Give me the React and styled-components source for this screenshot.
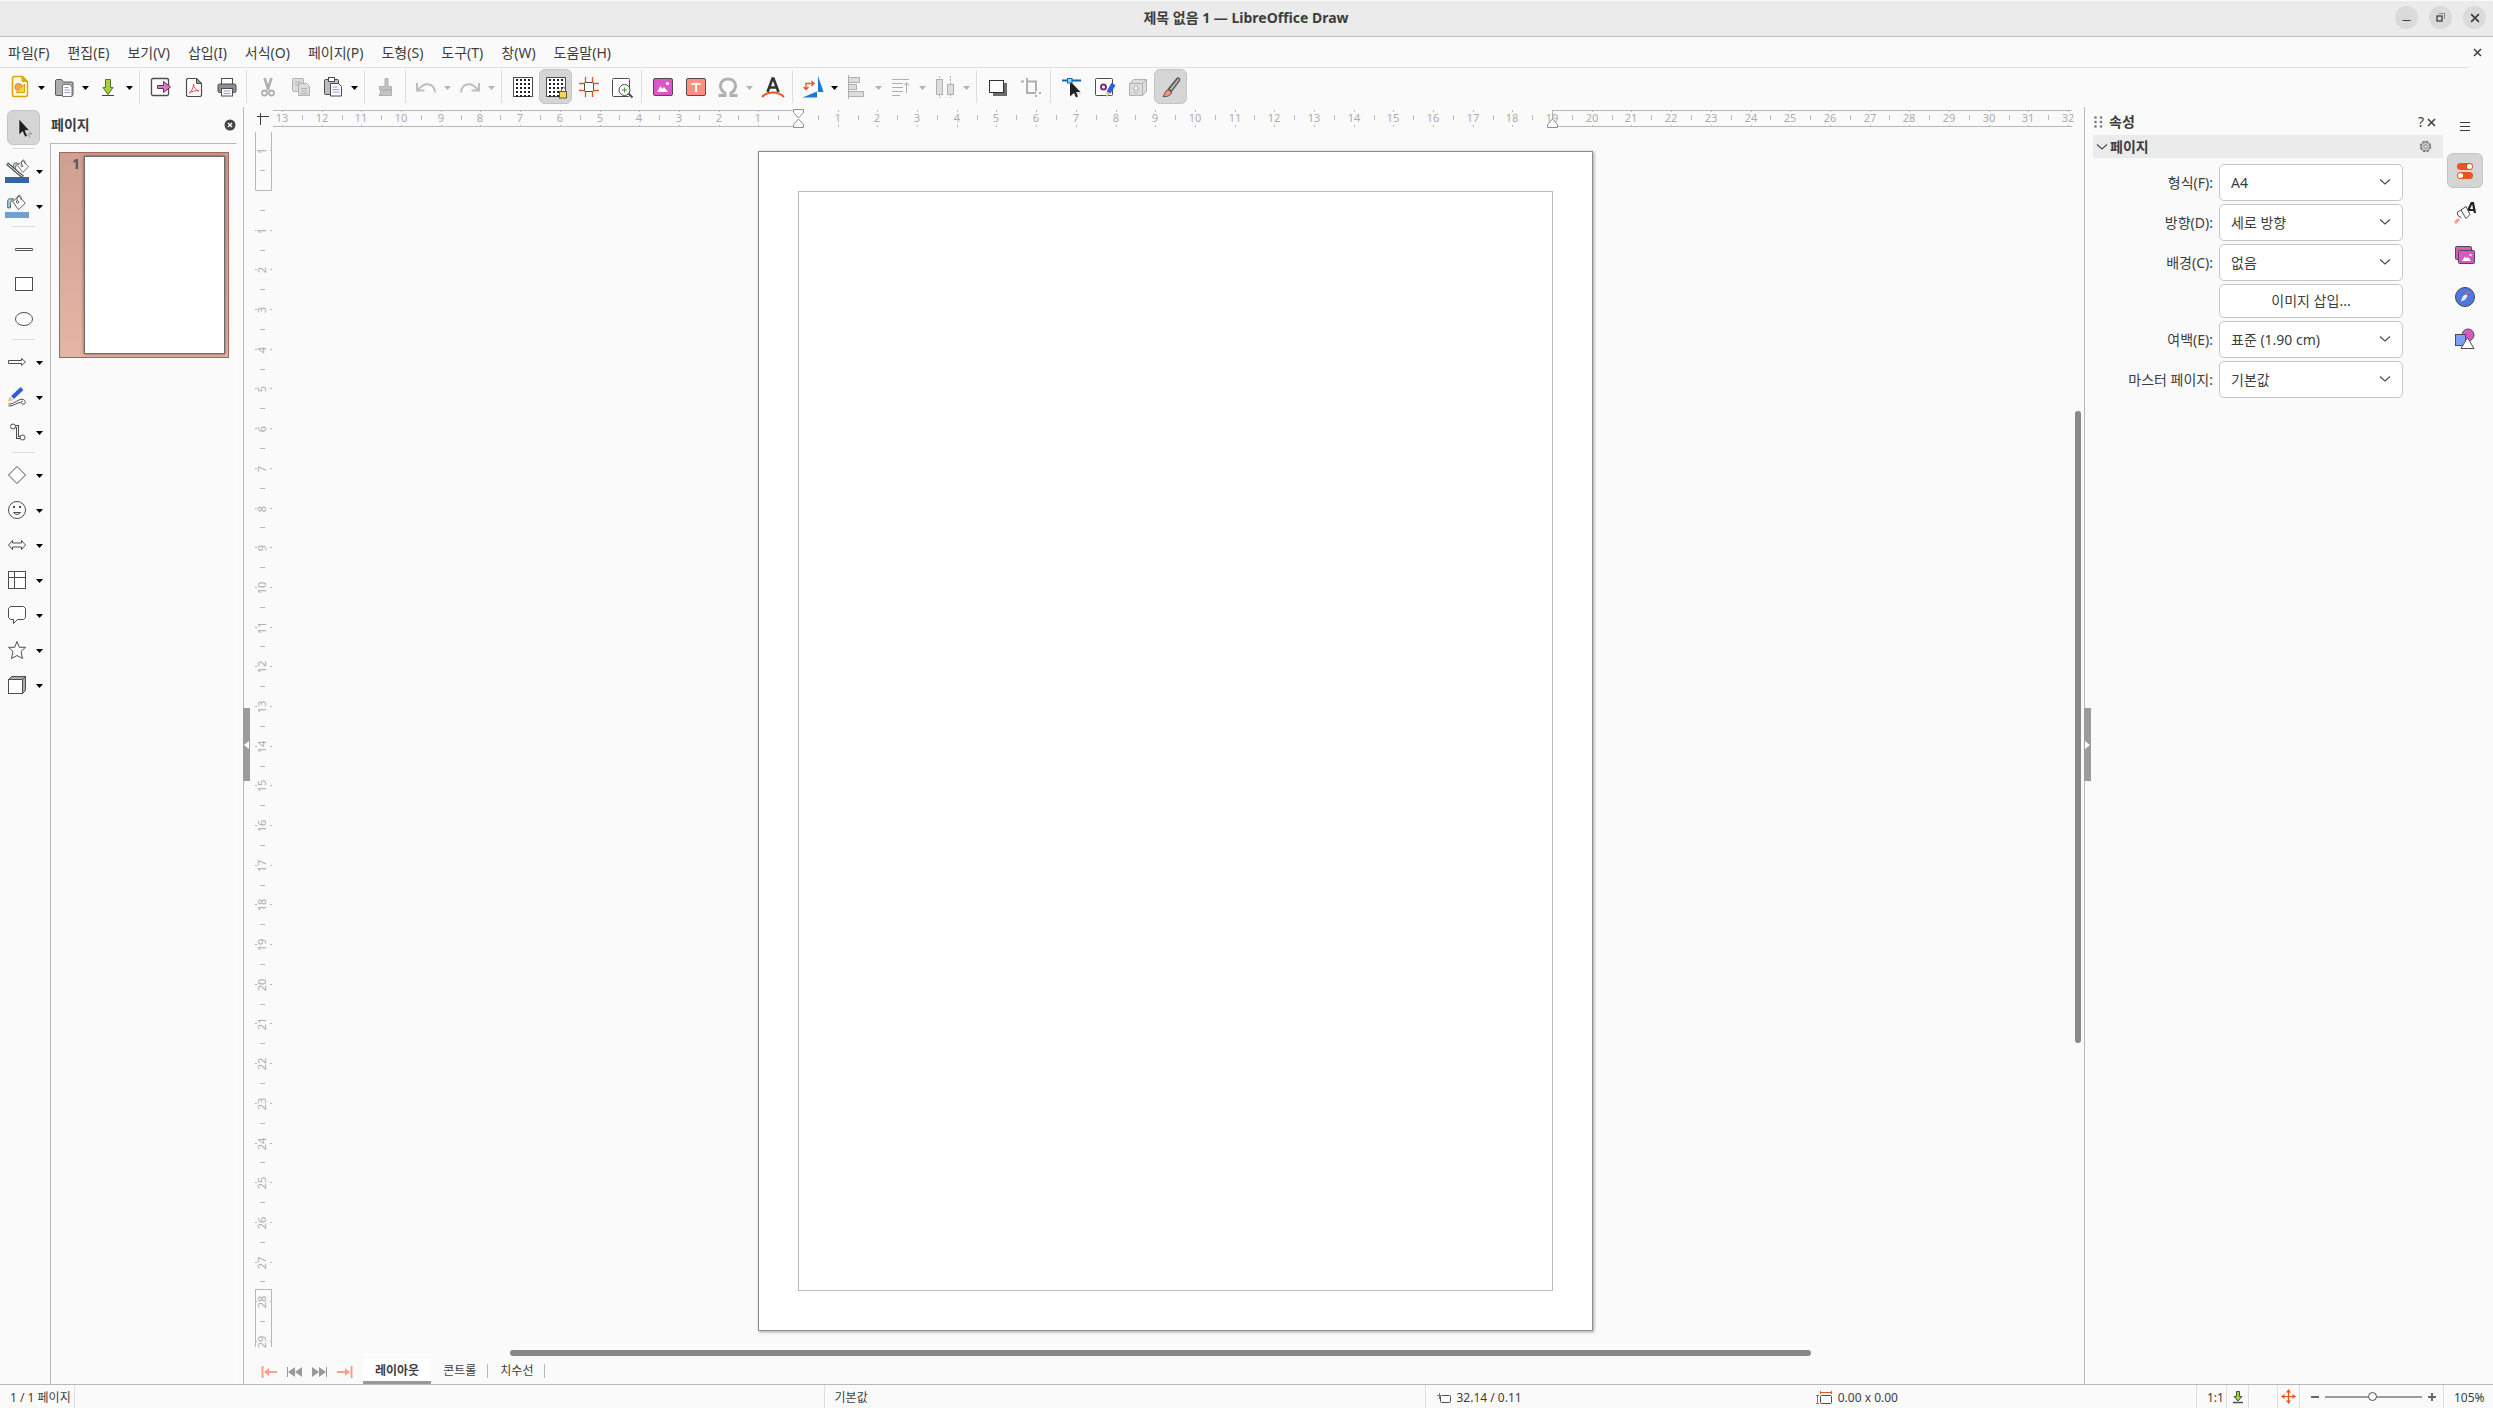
import { Fragment } from "react";
import styled, { createGlobalStyle, css } from "styled-components";

const GlobalStyle = createGlobalStyle`
  * {
    box-sizing: border-box;
  }
  body {
    margin: 0;
    background: #fafafa;
    color: #3d3d3d;
    font-family: "Noto Sans", "Noto Sans CJK KR", sans-serif;
    font-size: 14px;
    line-height: 20px;
  }
  button, select {
    font: inherit;
    color: inherit;
  }
`;

/* pixels per centimetre at 105% */
const CM = 39.69;
const ORIGIN_X = 525;
const ORIGIN_Y = 60;
const DARK = "#4d4d4d";
const FAINT = "#b8b8b8";

const Window = styled.div`
  display: flex;
  flex-direction: column;
  height: 100vh;
  overflow: hidden;
`;

const PlainButton = styled.button`
  display: flex;
  align-items: center;
  justify-content: center;
  padding: 0;
  border: 0;
  background: none;
`;

const TitleBar = styled.header`
  display: grid;
  grid-template-columns: 1fr auto 1fr;
  align-items: center;
  height: 37px;
  flex: none;
  padding: 0 7px 2px 6px;
  background: #ebebeb;
  border-top: 1px solid #fafafa;
  border-bottom: 1px solid #bdbdbd;
`;

const Title = styled.h1`
  grid-column: 2;
  margin: 0;
  font-size: 14px;
  font-weight: 700;
`;

const WindowButtons = styled.div`
  display: flex;
  justify-content: flex-end;
  gap: 11px;
`;

const RoundButton = styled(PlainButton)`
  width: 23px;
  height: 23px;
  border-radius: 50%;
  background: #dadada;
`;

const MenuBar = styled.nav`
  display: flex;
  align-items: center;
  gap: 18px;
  height: 31px;
  flex: none;
  margin-right: 24px;
  padding: 2px 0 0 8px;
  border-bottom: 1px solid #e0e0e0;
`;

const MenuItem = styled(PlainButton)`
  white-space: nowrap;
`;

const CloseDocument = styled(PlainButton)`
  position: absolute;
  top: 42px;
  right: 6px;
  width: 20px;
  height: 20px;
`;

const Toolbar = styled.div`
  display: flex;
  align-items: center;
  height: 39px;
  flex: none;
  padding: 0 0 2px 4px;
`;

const pressed = css`
  background: #d5d5d5;
  border: 1px solid #c4c4c4;
  border-radius: 6px;
`;

const ToolButton = styled(PlainButton)`
  width: ${(p) => (p.$split ? 31 : 33)}px;
  height: 35px;
  flex: none;
  ${(p) => p.$on && pressed}
`;

const ArrowButton = styled(PlainButton)`
  width: 13px;
  height: 35px;
  flex: none;
  padding-top: 2px;
`;

const ToolSeparator = styled.span`
  width: 1px;
  height: 33px;
  margin: 0 4px 0 3px;
  background: #dedede;
`;

const Svg = styled.svg`
  display: block;
  flex: none;
`;

const Workspace = styled.main`
  display: flex;
  flex: 1;
  min-height: 0;
`;

const DrawBar = styled.div`
  display: flex;
  flex-direction: column;
  width: 50px;
  padding-top: 3px;
`;

const DrawRow = styled.div`
  display: flex;
  align-items: center;
  height: 35px;
  flex: none;
  padding-left: ${(p) => (p.$single ? 7 : 0)}px;
`;

const DrawButton = styled(PlainButton)`
  width: 33px;
  height: 35px;
  ${(p) => p.$on && pressed}
`;

const DrawSeparator = styled.span`
  width: 23px;
  height: 1px;
  flex: none;
  margin: 3px 0 4px 12px;
  background: #dedede;
`;

const PagePanel = styled.aside`
  display: flex;
  flex-direction: column;
  width: 193px;
`;

const PanelTitle = styled.div`
  display: flex;
  align-items: center;
  justify-content: space-between;
  height: 36px;
  flex: none;
  padding: 0 7px 0 1px;
`;

const Heading = styled.h2`
  margin: 0;
  font-size: 14px;
  font-weight: 700;
`;

const PageList = styled.div`
  flex: 1;
  margin-right: 6px;
  padding: 8px;
  border-top: 1px solid #b8b8b8;
  border-left: 1px solid #b8b8b8;
  border-right: 1px solid #fff;
`;

const PageThumb = styled.button`
  display: flex;
  justify-content: space-between;
  align-items: stretch;
  width: 170px;
  height: 206px;
  padding: 3px;
  border: 1px solid #a0675a;
  background: linear-gradient(#cfa092, #e4b4a5);
  text-align: left;
`;

const ThumbNumber = styled.span`
  width: 17px;
  font-weight: 700;
  font-size: 14px;
  line-height: 16px;
  text-align: right;
  color: #555;
`;

const ThumbPage = styled.span`
  width: 141px;
  background: #fff;
  border: 1px solid #6b6b6b;
  box-shadow: 0 0 3px rgba(0, 0, 0, 0.5);
`;

const Splitter = styled.div`
  position: relative;
  width: ${(p) => p.$width}px;
  flex: none;
  border-left: 1px solid #b8b8b8;
`;

const SplitterHandle = styled(PlainButton)`
  position: absolute;
  top: 47.1%;
  left: -1px;
  width: 7px;
  height: 73px;
  background: #9c9c9c;
`;

const DocumentArea = styled.section`
  display: grid;
  grid-template-columns: 23px minmax(0, 1fr) 12px;
  grid-template-rows: 24px minmax(0, 1fr) 12px 25px;
  flex: 1;
  min-width: 0;
`;

const RulerSvg = styled.svg`
  display: block;
  width: 100%;
  height: 100%;
  overflow: visible;
`;

const RulerText = styled.text`
  fill: #acacac;
  font-family: "Noto Sans", sans-serif;
  font-size: 11px;
  text-anchor: middle;
`;

const Canvas = styled.div`
  overflow: hidden;
`;

const Sheet = styled.div`
  width: 835px;
  height: 1180px;
  margin: 20px 0 0 ${ORIGIN_X - 40}px;
  padding: 39px;
  background: #fff;
  border: 1px solid #8c8c8c;
  box-shadow: 1px 1px 3px rgba(0, 0, 0, 0.35);
`;

const SheetMargins = styled.div`
  height: 100%;
  border: 1px solid #bababa;
`;

const VerticalTrack = styled.div`
  padding-left: 3px;
`;

const VerticalThumb = styled.div`
  position: relative;
  top: 23%;
  width: 6px;
  height: 52%;
  border-radius: 3px;
  background: #888;
`;

const HorizontalTrack = styled.div`
  grid-column: 2;
  padding-top: 3px;
`;

const HorizontalThumb = styled.div`
  width: 72.3%;
  height: 6px;
  margin-left: 13.2%;
  border-radius: 3px;
  background: #888;
`;

const TabRow = styled.div`
  display: flex;
  align-items: center;
  grid-column: 1 / -1;
  padding-left: 7px;
  font-size: 12px;
`;

const NavButton = styled(PlainButton)`
  width: 25px;
  height: 25px;
`;

const LayerTab = styled(PlainButton)`
  position: relative;
  height: 25px;
  padding: 0 12px 2px;
  ${(p) =>
    p.$active
      ? css`
          margin-left: 6px;
          background: #fff;
          border-bottom: 3px solid #999;
          padding-top: 3px;
          font-weight: 700;
        `
      : css`
          &::after {
            content: "";
            position: absolute;
            right: 0;
            top: 5px;
            height: 14px;
            border-right: 1px solid #b8b8b8;
          }
        `}
`;

const Sidebar = styled.aside`
  display: flex;
  width: 408px;
  flex: none;
  padding-left: 8px;
`;

const Deck = styled.div`
  width: 350px;
`;

const DeckTitle = styled.div`
  display: flex;
  align-items: center;
  height: 28px;
  gap: 6px;
  padding: 2px 7px 0 1px;
`;

const DeckTools = styled.div`
  display: flex;
  gap: 3px;
  margin-left: auto;
`;

const SectionTitle = styled.div`
  display: flex;
  align-items: center;
  height: 23px;
  gap: 2px;
  padding: 0 11px 0 3px;
  background: #ebebeb;
`;

const SectionMenu = styled(PlainButton)`
  margin-left: auto;
`;

const Form = styled.form`
  display: grid;
  grid-template-columns: 120px 184px;
  align-items: center;
  gap: 3px 6px;
  padding-top: 6px;
`;

const FieldLabel = styled.label`
  text-align: right;
`;

const SelectBox = styled.div`
  position: relative;
  svg {
    position: absolute;
    right: 12px;
    top: 12px;
    pointer-events: none;
  }
`;

const Select = styled.select`
  display: block;
  width: 100%;
  height: 37px;
  padding: 0 11px;
  appearance: none;
  background: #fff;
  border: 1px solid #c6c6c6;
  border-radius: 5px;
`;

const InsertImage = styled.button`
  grid-column: 2;
  height: 34px;
  background: #fff;
  border: 1px solid #c6c6c6;
  border-radius: 5px;
`;

const DeckTabs = styled.div`
  display: flex;
  flex-direction: column;
  align-items: center;
  gap: 7px;
  width: 36px;
  margin-left: 4px;
  padding-top: 2px;
`;

const DeckTab = styled(PlainButton)`
  width: 36px;
  height: 35px;
  ${(p) => p.$on && pressed}
  &:first-child {
    margin-bottom: 2px;
  }
`;

const StatusBar = styled.footer`
  display: flex;
  height: 24px;
  flex: none;
  border-top: 1px solid #b8b8b8;
  font-size: 12px;
`;

const StatusCell = styled.div`
  display: flex;
  align-items: center;
  gap: 4px;
  padding: 2px 5px 0 10px;
  border-right: ${(p) => (p.$open ? 0 : 1)}px solid #dedede;
  flex: ${(p) => (p.$grow ? `${p.$grow} 1 0` : "none")};
  width: ${(p) => (p.$width ? `${p.$width}px` : "auto")};
  white-space: nowrap;
`;

const IconCell = styled(StatusCell)`
  justify-content: center;
  padding: 0;
`;

const ZoomCell = styled(StatusCell)`
  gap: 0;
  width: 144px;
  justify-content: center;
  padding: 0 0 0 3px;
`;

const ZoomSlider = styled.input`
  width: 97px;
  height: 12px;
  margin: 0 5px;
  appearance: none;
  background: linear-gradient(#9a9a9a, #9a9a9a) center / 100% 2px no-repeat;
  &::-webkit-slider-thumb {
    appearance: none;
    width: 9px;
    height: 9px;
    border: 1px solid #4d4d4d;
    border-radius: 50%;
    background: #fff;
  }
`;

const g = { fill: "#dcdcdc", stroke: "#b0b0b0" };

const dots = [0, 1, 2, 3, 4].flatMap((y) =>
  [0, 1, 2, 3].map((x) => [6 + x * 4, 4 + y * 4])
);

const gridShape = (
  <>
    <rect x="2.5" y="2.5" width="19" height="19" fill="#fff" stroke={DARK} />
    {dots.map(([x, y]) => (
      <rect key={`${x}-${y}`} x={x - 1} y={y} width="2" height="2" fill="#222" />
    ))}
  </>
);

const toolIcons = {
  newDoc: (
    <>
      <path d="M6 1.5h8.5l5 5v13a2 2 0 0 1-2 2H6a1.5 1.5 0 0 1-1.5-1.5V3A1.5 1.5 0 0 1 6 1.5z" fill="#fff9e8" stroke="#dea308" strokeWidth="1.5" />
      <path d="M14 1.5v5h5.5z" fill="#e8ac14" stroke="#dea308" />
      <circle cx="10.5" cy="12" r="3.5" fill="#f2a55c" stroke="#d9831f" />
      <path d="M8 17.5 16.5 9v8.5z" fill="#f7cf4d" stroke="#dea308" />
    </>
  ),
  open: (
    <>
      <path d="M3.5 20V5.5l1-1h5l2 2.5h9l.5.5V20l-1 .5h-15z" fill="#adadad" stroke="#5b5b5b" />
      <path d="M10.5 9.500h7l2.5 2.5v9.5h-9.500z" fill="#fff" stroke="#777" />
      <path d="M12.5 12.5h4M12.5 15h5.5M12.5 17.5h5.5" stroke="#9a93ee" fill="none" />
    </>
  ),
  save: (
    <>
      <path d="M9.500 4.500h5v8h2.500L12 19.500 7 12.500h2.500z" fill="#a2d43c" stroke="#5a6b35" />
      <path d="M6 20.5h12" stroke="#444" />
    </>
  ),
  exportDoc: (
    <>
      <rect x="2.5" y="3.5" width="17" height="17" rx="1.5" fill="#fff" stroke={DARK} strokeWidth="1.3" />
      <path d="M8.5 10.5h6v-4l7 5.5-7 5.5v-4h-6z" fill="#e372c9" stroke="#5c3553" />
    </>
  ),
  pdf: (
    <>
      <path d="M5.5 3.5h9l5 5v12l-1 1h-13l-1-1v-16z" fill="#fff" stroke={DARK} strokeWidth="1.2" />
      <path d="M14.5 3.5v5h5z" fill="#999" stroke={DARK} />
      <path d="M7 18c2.500-1.500 4.500-5 4.500-9 .5 4 3 6.500 5.500 7-3.500-1-7 .5-10 2z" fill="none" stroke="#f0455a" />
    </>
  ),
  print: (
    <>
      <rect x="6.5" y="3.5" width="11" height="6" fill="#fff" stroke={DARK} />
      <rect x="3" y="9" width="18" height="8.5" rx="1.5" fill="#8f8f8f" stroke={DARK} />
      <rect x="6.5" y="13.5" width="11" height="7.500" fill="#fff" stroke={DARK} />
      <path d="M8.5 16h7M8.500 18.500h7" stroke="#9a93ee" />
    </>
  ),
  cut: (
    <g fill="none" stroke="#b0b0b0" strokeWidth="1.8">
      <path d="M8.500 3l4 12M15.500 3l-4 12" strokeWidth="2.600" />
      <circle cx="8.500" cy="18" r="2.500" />
      <circle cx="15.500" cy="18" r="2.500" />
    </g>
  ),
  copy: (
    <g {...g}>
      <rect x="3.500" y="3.500" width="11" height="13" rx="1" />
      <path d="M6 7h6M6 10h6" />
      <path d="M9.500 8.500h8l3 3v9h-11z" />
      <path d="M12 13.500h6M12 16h6M12 18.500h6" />
    </g>
  ),
  paste: (
    <>
      <rect x="3.500" y="4.500" width="14" height="15" rx="1" fill="#bdbdbd" stroke={DARK} />
      <rect x="7.500" y="2.500" width="6" height="4" fill="#fff" stroke={DARK} />
      <path d="M9.500 8.500h8l3 3v9.500h-11z" fill="#fff" stroke={DARK} />
      <path d="M11.500 12h5M11.500 14.500h7M11.500 17h7" stroke="#9a93ee" />
    </>
  ),
  brush: (
    <path d="M11 3.500h3v8h3.500v3h-12v-3H11zM6.500 15h11v5.500H5c1-1.500 1.500-3 1.500-5.500z" fill="#c4c4c4" stroke="#b0b0b0" />
  ),
  undo: <path d="M21 17.500c-.5-9-10-11.500-16.500-3M3 8v7.500h7.500" fill="none" stroke="#bdbdbd" strokeWidth="2" />,
  redo: <path d="M3 17.500c.5-9 10-11.500 16.500-3M21 8v7.500h-7.500" fill="none" stroke="#bdbdbd" strokeWidth="2" />,
  grid: gridShape,
  snapGrid: (
    <>
      {gridShape}
      <path d="M17.500 17v-2.500a2 2 0 0 1 4 0V17" fill="none" stroke="#555" />
      <rect x="15.500" y="16.500" width="7" height="6.500" fill="#f8d45c" stroke="#6b5a20" />
    </>
  ),
  helplines: (
    <>
      <path d="M2 8.500h20M2 15.500h20M8.500 2v20M15.500 2v20" stroke="#e95420" strokeWidth="1.300" />
      <rect x="7.500" y="7.500" width="9" height="9" rx="1" fill="#fff" stroke={DARK} />
    </>
  ),
  zoomPage: (
    <>
      <rect x="2.500" y="3.500" width="17" height="18" rx="1" fill="#fff" stroke={DARK} />
      <path d="M18.500 18.500l4 4" stroke={DARK} strokeWidth="2" />
      <circle cx="14.500" cy="15" r="5.500" fill="#fff" stroke={DARK} />
      <path d="M14.500 12.500v5M12 15h5" stroke="#3ea024" />
    </>
  ),
  image: (
    <>
      <rect x="2.500" y="3.500" width="19" height="17" rx="1.500" fill="#d858c8" stroke={DARK} />
      <path d="M6 17l3.500-6 2 3 1.500-2 4 5z" fill="#fff" />
      <circle cx="16.500" cy="8.500" r="1.600" fill="#fff" />
    </>
  ),
  textBox: (
    <>
      <rect x="2.500" y="3.500" width="19" height="17" rx="1.500" fill="#ff8f80" stroke={DARK} />
      <path d="M7.500 9h9M12 9v8" stroke="#fff" strokeWidth="2" />
    </>
  ),
  omega: (
    <path d="M2.500 20.500h6.500v-2.500C5.500 16 4.500 13.500 4.500 10.500 4.800 6.500 8 4 12 4s7.200 2.500 7.500 6.500c0 3-1 5.500-4.500 7.500v2.500h6.500" fill="none" stroke="#b0b0b0" strokeWidth="3" />
  ),
  fontwork: (
    <>
      <path d="M6.500 17l5-13.500h1L17.500 17M8.500 12.500h7" fill="none" stroke="#333" strokeWidth="2.600" />
      <path d="M1 22c6-6 16-6 22 0" fill="none" stroke="#e95420" strokeWidth="2" />
    </>
  ),
  transform: (
    <>
      <path d="M17 1l5.500 16H17z" fill="#1e78d2" />
      <path d="M1.500 22.500l14.500-6v6z" fill="#1e78d2" />
      <path d="M5 14V8.500h7.500M10.500 6l2.500 2.500L10.500 11M2.500 12L5 14.500 7.500 12" fill="none" stroke="#e95420" strokeWidth="1.400" />
    </>
  ),
  align: (
    <g {...g}>
      <path d="M3.500 0v24" fill="none" />
      <rect x="3.500" y="2.500" width="11" height="5" />
      <rect x="3.500" y="9.500" width="8" height="5" />
      <rect x="3.500" y="16.500" width="15" height="5" />
    </g>
  ),
  arrange: (
    <path d="M3 4.500h17M3 8.500h11M3 12.500h11M3 16.500h11M3 20.500h8M17.500 18V8M15 10.500l2.500-3 2.500 3" fill="none" stroke="#b0b0b0" />
  ),
  distribute: (
    <g {...g}>
      <path d="M6.500 1v22M17.500 1v22" strokeDasharray="2 1" />
      <rect x="3.500" y="4.500" width="6" height="15" />
      <rect x="14.500" y="9.500" width="6" height="10" />
    </g>
  ),
  shadow: (
    <>
      <rect x="7" y="8" width="14" height="13" fill="#6b6b6b" />
      <rect x="3.500" y="5.500" width="14" height="12" fill="#fff" stroke="#333" />
    </>
  ),
  crop: <path d="M2 6.500h3M8 6.500h9v10M8 3v15h9M20 18h2M17 20v2" fill="none" stroke="#b0b0b0" strokeWidth="2" />,
  points: (
    <>
      <path d="M2 5.500h19" stroke="#0f67b1" strokeWidth="2" />
      <path d="M14 12l8 7.500h-5" fill="#ddd" />
      <path d="M10 6v15.500l4-3.500 2 4.500 2-1-2-4.500h4.500z" fill="#222" />
      <rect x="7.500" y="3.500" width="4.500" height="4.500" fill="#9fd4f5" stroke="#0f67b1" />
    </>
  ),
  gluePoints: (
    <>
      <rect x="2.500" y="3.500" width="17" height="17" rx="1" fill="#fff" stroke={DARK} />
      <circle cx="10.500" cy="12" r="2.500" fill="none" stroke="#7c2d7c" strokeWidth="2" />
      <path d="M20.500 9l-5 8.500" stroke="#2d5fe0" strokeWidth="4.500" />
      <path d="M13.500 16.500l4 2-4.500 4z" fill="#f5bb7c" />
    </>
  ),
  extrude: (
    <g {...g}>
      <path d="M3.500 8.500l4-4h13v11.500l-4 4.500h-13zM3.500 8.500h13v12M16.500 8.500l4-4" />
      <path d="M9 18v-4H7l3-3.500 3 3.500h-2v4z" fill="#fff" />
    </g>
  ),
  drawFunctions: (
    <>
      <path d="M9.500 14l8.500-10.500c1.500-1.500 3.500.5 2.500 2L12.500 16.500z" fill="#aaa" stroke={DARK} strokeWidth="1.200" />
      <path d="M9 14.500l3.500 2.500c-.5 3.500-4 5-8.500 4.500 2-2 2-6 5-7z" fill="#ff8f80" stroke={DARK} />
    </>
  ),
};

const bucket = (
  <>
    <path d="M8.500 9.500l7-6 7 8-7.500 7z" fill="#fff" stroke={DARK} />
    <path d="M13.500 9.500c-1-9 5-9 4.500-1.500" fill="none" stroke={DARK} />
    <circle cx="14" cy="10" r="1.300" fill="#fff" stroke={DARK} />
    <path d="M9.500 6.500H5c-1.500 0-2 1-2 3v7h3v-6z" fill="#9fd9ee" stroke={DARK} />
  </>
);

const drawIcons = {
  select: (
    <>
      <path d="M12 10l8 8h-4l2 3.500" fill="none" stroke="#999" />
      <path d="M7 3v16l3.500-3.500 2.500 5.500 2.500-1-2.500-5.500h4.500z" fill="#1e1e1e" stroke="#fff" strokeWidth=".5" />
    </>
  ),
  lineColor: (
    <>
      <g transform="translate(6 -1) scale(.78)">{bucket}</g>
      <path d="M2 4.500L18 18" stroke={DARK} strokeWidth="3" />
      <path d="M2.500 5L17.500 17.500" stroke="#fff" />
      <rect y="18" width="24" height="6" fill="#3465a4" />
    </>
  ),
  fillColor: (
    <>
      <g transform="translate(0 -1) scale(.9)">{bucket}</g>
      <rect y="18" width="24" height="6" fill="#729fcf" />
    </>
  ),
  line: <rect x="3.500" y="11.500" width="17" height="2" rx=".5" fill="#fff" stroke={DARK} />,
  rect: <rect x="3.500" y="5.500" width="17" height="13" fill="#fff" stroke={DARK} />,
  ellipse: <ellipse cx="12" cy="12" rx="8.500" ry="6.500" fill="#fff" stroke={DARK} />,
  arrow: <path d="M3.500 10.500h13v-2L20.500 12l-4 3.500v-2h-13z" fill="#fff" stroke={DARK} />,
  curve: (
    <>
      <path d="M17 3.500L7.500 12.500" stroke="#2d5fe0" strokeWidth="4" />
      <path d="M3 17l1.500-5.500 3.500 3.500z" fill="#f5bb7c" />
      <path d="M3.500 19c6 .5 10-6 15-4.500 3 1.500 2 5.500-1 4.500s-1-3.500.5-2.500M3.500 21c5 .5 9-4 12-3.500" fill="none" stroke={DARK} />
    </>
  ),
  connector: (
    <>
      <path d="M9 6.500h3.500v11H17" fill="none" stroke={DARK} strokeWidth="3" />
      <path d="M9 6.500h3.500v11H17" fill="none" stroke="#fff" />
      <circle cx="8" cy="6.500" r="2.500" fill="#fff" stroke={DARK} />
      <circle cx="17.500" cy="17.500" r="2.500" fill="#fff" stroke={DARK} />
    </>
  ),
  diamond: <path d="M12 3.500l8.500 8.500-8.500 8.500L3.500 12z" fill="#fff" stroke={DARK} />,
  smile: (
    <>
      <circle cx="12" cy="12" r="8.500" fill="#fff" stroke={DARK} />
      <path d="M8 9h2M14 9h2" stroke={DARK} strokeWidth="2" />
      <path d="M8.500 14.500h7c-1 2.500-6 2.500-7 0z" fill="none" stroke={DARK} />
    </>
  ),
  blockArrow: <path d="M3.500 12l4-4.500v2.500h9V7.500l4 4.500-4 4.500V14h-9v2.500z" fill="#fff" stroke={DARK} />,
  table: (
    <>
      <rect x="3.500" y="3.500" width="17" height="17" fill="#fff" stroke={DARK} />
      <path d="M3.500 9.500h17M9.500 3.500v17" stroke={DARK} />
    </>
  ),
  callout: (
    <path d="M5.500 3.500h13l2 2v9l-2 2h-6l-4 4v-4h-3l-2-2v-9z" fill="#fff" stroke={DARK} />
  ),
  star: (
    <path d="M12 3.500l2.300 5.800h6.200l-4.500 4.200 1.500 7L12 17.500l-5.500 3 1.500-7-4.500-4.200h6.200z" fill="#fff" stroke={DARK} />
  ),
  cube: (
    <>
      <path d="M3.500 6.500l3-3h14v14l-3 3z" fill="#aaa" stroke={DARK} />
      <rect x="3.500" y="6.500" width="14" height="14" fill="#fff" stroke={DARK} />
      <path d="M17.500 6.500l3-3" stroke={DARK} />
    </>
  ),
};

const deckIcons = {
  properties: (
    <>
      <rect x="4" y="4" width="16" height="7" rx="3.500" fill="#e95420" />
      <circle cx="16.500" cy="7.500" r="2.500" fill="#fff" />
      <rect x="4" y="13" width="16" height="7" rx="3.500" fill="#e95420" />
      <circle cx="7.500" cy="16.500" r="2.500" fill="#fff" />
    </>
  ),
  styles: (
    <>
      <path d="M14 12l4.500-10h1.500l2 10M16 9h5" fill="none" stroke="#222" strokeWidth="2.200" />
      <path d="M2 22l4-4" stroke="#ff9a88" strokeWidth="3" />
      <path d="M8 9l5-3.500 4 8-4 4zM8 9l-3.500 2v3l4 3" fill="#fff" stroke={DARK} />
    </>
  ),
  gallery: (
    <>
      <rect x="2.500" y="3.500" width="16" height="13" rx="1" fill="#d858c8" stroke={DARK} />
      <rect x="5.500" y="7.500" width="16" height="13" rx="1" fill="#d858c8" stroke={DARK} />
      <path d="M9 18l3-4.500 1.500 2L15 14l3 4z" fill="#fff" />
      <circle cx="17.500" cy="12" r="1.100" fill="#fff" />
    </>
  ),
  navigator: (
    <>
      <circle cx="12" cy="12" r="9.500" fill="#4c78e0" stroke="#444" />
      <path d="M8 16.500l1.500-5 3 3z" fill="#eee" />
      <path d="M9.500 11.500L16.500 7l-4 7.500z" fill="#eee" />
      <path d="M13 9.500L16.500 7l-1.500 4z" fill="#e33" />
    </>
  ),
  shapes: (
    <>
      <circle cx="15" cy="8" r="6" fill="#d858c8" stroke={DARK} />
      <rect x="2.500" y="7.500" width="10" height="11" fill="#7d9ff5" stroke={DARK} />
      <path d="M14.500 10.500l6.500 11H8z" fill="#fff" stroke={DARK} />
    </>
  ),
};

const menus = [
  "파일(F)", "편집(E)", "보기(V)", "삽입(I)", "서식(O)",
  "페이지(P)", "도형(S)", "도구(T)", "창(W)", "도움말(H)",
];

const toolGroups = [
  [
    { icon: "newDoc", label: "새로 만들기", split: true },
    { icon: "open", label: "열기", split: true },
    { icon: "save", label: "저장", split: true },
  ],
  [
    { icon: "exportDoc", label: "내보내기" },
    { icon: "pdf", label: "PDF로 내보내기" },
    { icon: "print", label: "인쇄" },
  ],
  [
    { icon: "cut", label: "잘라내기" },
    { icon: "copy", label: "복사" },
    { icon: "paste", label: "붙여넣기", split: true },
  ],
  [{ icon: "brush", label: "서식 복제" }],
  [
    { icon: "undo", label: "실행 취소", split: true, disabled: true },
    { icon: "redo", label: "다시 실행", split: true, disabled: true },
  ],
  [
    { icon: "grid", label: "격자 표시" },
    { icon: "snapGrid", label: "격자에 맞추기", on: true },
    { icon: "helplines", label: "안내선" },
    { icon: "zoomPage", label: "확대/축소" },
  ],
  [
    { icon: "image", label: "이미지 삽입" },
    { icon: "textBox", label: "텍스트 상자" },
    { icon: "omega", label: "특수 문자", split: true, disabled: true },
    { icon: "fontwork", label: "글꼴 효과" },
  ],
  [
    { icon: "transform", label: "변형", split: true },
    { icon: "align", label: "정렬", split: true, disabled: true },
    { icon: "arrange", label: "배열", split: true, disabled: true },
    { icon: "distribute", label: "배분", split: true, disabled: true },
  ],
  [
    { icon: "shadow", label: "그림자" },
    { icon: "crop", label: "자르기" },
  ],
  [
    { icon: "points", label: "점 편집" },
    { icon: "gluePoints", label: "연결점" },
    { icon: "extrude", label: "돌출" },
    { icon: "drawFunctions", label: "그리기 기능", on: true },
  ],
];

const drawGroups = [
  [{ icon: "select", label: "선택", single: true, on: true }],
  [
    { icon: "lineColor", label: "선 색상" },
    { icon: "fillColor", label: "채우기 색상" },
  ],
  [
    { icon: "line", label: "선", single: true },
    { icon: "rect", label: "사각형", single: true },
    { icon: "ellipse", label: "타원", single: true },
  ],
  [
    { icon: "arrow", label: "선과 화살표" },
    { icon: "curve", label: "곡선" },
    { icon: "connector", label: "연결선" },
  ],
  [
    { icon: "diamond", label: "기본 도형" },
    { icon: "smile", label: "기호 도형" },
    { icon: "blockArrow", label: "블록 화살표" },
    { icon: "table", label: "순서도" },
    { icon: "callout", label: "설명선" },
    { icon: "star", label: "별" },
    { icon: "cube", label: "3D 개체" },
  ],
];

const decks = [
  { icon: "properties", label: "속성", on: true },
  { icon: "styles", label: "스타일" },
  { icon: "gallery", label: "갤러리" },
  { icon: "navigator", label: "탐색기" },
  { icon: "shapes", label: "도형" },
];

const Icon = ({ children }) => (
  <Svg width="24" height="24" viewBox="0 0 24 24" aria-hidden="true">{children}</Svg>
);

const Caret = ({ disabled }) => (
  <Svg width="7" height="4" viewBox="0 0 7 4">
    <path d="M0 0h7L3.500 4z" fill={disabled ? "#b4b4b4" : "#000"} />
  </Svg>
);

const Cross = ({ size = 9 }) => (
  <Svg width={size} height={size} viewBox="0 0 9 9">
    <path d="M1 1l7 7M8 1L1 8" stroke="#3d3d3d" strokeWidth="1.500" />
  </Svg>
);

const Chevron = () => (
  <Svg width="12" height="12" viewBox="0 0 12 12">
    <path d="M1 3.500l5 4.500 5-4.500" fill="none" stroke={DARK} strokeWidth="1.200" />
  </Svg>
);

const Tool = ({ icon, label, split, on, disabled }) => (
  <>
    <ToolButton $split={split} $on={on} aria-label={label} aria-pressed={on}>
      <Icon>{toolIcons[icon]}</Icon>
    </ToolButton>
    {split && (
      <ArrowButton aria-label={`${label} 목록`}>
        <Caret disabled={disabled} />
      </ArrowButton>
    )}
  </>
);

const DrawTool = ({ icon, label, single, on }) => (
  <DrawRow $single={single}>
    <DrawButton $on={on} aria-label={label}>
      <Icon>{drawIcons[icon]}</Icon>
    </DrawButton>
    {!single && (
      <ArrowButton aria-label={`${label} 목록`}>
        <Caret />
      </ArrowButton>
    )}
  </DrawRow>
);

const range = (from, to) =>
  Array.from({ length: to - from + 1 }, (_, i) => from + i);

const HorizontalRuler = () => {
  const end = Math.round(ORIGIN_X + 19 * CM);
  return (
    <RulerSvg>
      <path d={`M0 3.500H${ORIGIN_X}M0 19.500H${ORIGIN_X}M${end + 0.5} 3v17`} stroke={FAINT} />
      <line x1={end} y1="3.500" x2="100%" y2="3.500" stroke={FAINT} />
      <line x1={end} y1="19.500" x2="100%" y2="19.500" stroke={FAINT} />
      {range(-13, 32).map((n) => {
        const x = Math.round(ORIGIN_X + n * CM);
        const half = Math.round(ORIGIN_X + (n + 0.5) * CM);
        return (
          <Fragment key={n}>
            {n !== 0 && <RulerText x={x} y="15">{Math.abs(n)}</RulerText>}
            <path d={`M${x + 0.5} 3v2M${x + 0.5} 18v2`} stroke={FAINT} />
            {n < 32 && <path d={`M${half + 0.5} 8v5`} stroke={FAINT} />}
          </Fragment>
        );
      })}
      <g fill="#fff" stroke="#8e8e8e" transform={`translate(${ORIGIN_X})`}>
        <path d="M-4.500 2.500h10v3l-5 5.500-5-5.500zM-4.500 20.500h10v-3l-5-5.500-5 5.500z" />
      </g>
      <path
        d="M-4.500 20.500h10v-3l-5-5.500-5 5.500z"
        transform={`translate(${end})`}
        fill="#fff"
        stroke="#8e8e8e"
      />
    </RulerSvg>
  );
};

const VerticalRuler = () => {
  const end = Math.round(ORIGIN_Y + 27.7 * CM);
  return (
    <RulerSvg>
      <path d={`M5.500 1V${ORIGIN_Y - 0.5}H21.500V1`} fill="none" stroke={FAINT} />
      <path d={`M5 ${end - 0.5}h17`} stroke={FAINT} />
      <line x1="5.500" y1={end} x2="5.500" y2="100%" stroke={FAINT} />
      <line x1="21.500" y1={end} x2="21.500" y2="100%" stroke={FAINT} />
      {range(-1, 29).map((n) => {
        const y = Math.round(ORIGIN_Y + n * CM);
        const half = Math.round(ORIGIN_Y + (n + 0.5) * CM);
        return (
          <Fragment key={n}>
            {n !== 0 && (
              <>
                <RulerText transform={`translate(16 ${y}) rotate(-90)`}>{Math.abs(n)}</RulerText>
                <path d={`M5 ${y - 0.5}h2M20 ${y - 0.5}h2`} stroke={FAINT} />
              </>
            )}
            {n < 29 && <path d={`M10 ${half - 0.5}h5`} stroke={FAINT} />}
          </Fragment>
        );
      })}
    </RulerSvg>
  );
};

const Field = ({ id, label, value }) => (
  <>
    <FieldLabel htmlFor={id}>{label}</FieldLabel>
    <SelectBox>
      <Select id={id} defaultValue={value}>
        <option>{value}</option>
      </Select>
      <Chevron />
    </SelectBox>
  </>
);

const PropertiesSidebar = () => (
  <Sidebar>
    <Deck>
      <DeckTitle>
        <Svg width="9" height="12" viewBox="0 0 9 12" fill="#777">
          {[1.5, 6, 10.5].map((y) => (
            <Fragment key={y}>
              <circle cx="1.500" cy={y} r="1.300" />
              <circle cx="7" cy={y} r="1.300" />
            </Fragment>
          ))}
        </Svg>
        <Heading>속성</Heading>
        <DeckTools>
          <PlainButton aria-label="도움말">?</PlainButton>
          <PlainButton aria-label="닫기"><Cross /></PlainButton>
        </DeckTools>
      </DeckTitle>
      <SectionTitle>
        <Chevron />
        <Heading>페이지</Heading>
        <SectionMenu aria-label="추가 옵션">
          <Svg width="13" height="13" viewBox="0 0 13 13">
            <circle cx="6.500" cy="6.500" r="5" fill="#ccc" stroke="#777" strokeWidth="1.500" strokeDasharray="2.600 1.300" />
            <circle cx="6.500" cy="6.500" r="4.200" fill="#ccc" stroke="#888" />
            <circle cx="6.500" cy="6.500" r="1.600" fill="#fff" stroke="#777" />
          </Svg>
        </SectionMenu>
      </SectionTitle>
      <Form>
        <Field id="format" label="형식(F):" value="A4" />
        <Field id="orientation" label="방향(D):" value="세로 방향" />
        <Field id="background" label="배경(C):" value="없음" />
        <InsertImage type="button">이미지 삽입...</InsertImage>
        <Field id="margin" label="여백(E):" value="표준 (1.90 cm)" />
        <Field id="master" label="마스터 페이지:" value="기본값" />
      </Form>
    </Deck>
    <DeckTabs>
      <DeckTab aria-label="사이드바 설정">
        <Svg width="10" height="11" viewBox="0 0 10 11">
          <path d="M0 1.500h10M0 5.500h10M0 9.500h10" stroke="#3d3d3d" />
        </Svg>
      </DeckTab>
      {decks.map((deck) => (
        <DeckTab key={deck.icon} $on={deck.on} aria-label={deck.label}>
          <Icon>{deckIcons[deck.icon]}</Icon>
        </DeckTab>
      ))}
    </DeckTabs>
  </Sidebar>
);

const LayerTabs = () => (
  <TabRow>
    <NavButton aria-label="처음">
      <Svg width="17" height="14" viewBox="0 0 17 14">
        <path d="M1.500 1v12M5 7h11" stroke="#f9a184" strokeWidth="2" />
        <path d="M3 7l5-4v8z" fill="#f9a184" />
      </Svg>
    </NavButton>
    <NavButton aria-label="이전">
      <Svg width="15" height="10" viewBox="0 0 15 10">
        <path d="M.5 0v10" stroke="#999" />
        <path d="M1 5l7-5v10zM8 5l7-5v10z" fill="#999" />
      </Svg>
    </NavButton>
    <NavButton aria-label="다음">
      <Svg width="15" height="10" viewBox="0 0 15 10">
        <path d="M14.500 0v10" stroke="#999" />
        <path d="M14 5L7 0v10zM7 5L0 0v10z" fill="#999" />
      </Svg>
    </NavButton>
    <NavButton aria-label="끝">
      <Svg width="17" height="14" viewBox="0 0 17 14">
        <path d="M15.500 1v12M1 7h11" stroke="#f9a184" strokeWidth="2" />
        <path d="M14 7L9 3v8z" fill="#f9a184" />
      </Svg>
    </NavButton>
    <LayerTab $active>레이아웃</LayerTab>
    <LayerTab>콘트롤</LayerTab>
    <LayerTab>치수선</LayerTab>
  </TabRow>
);

const Status = () => (
  <StatusBar>
    <StatusCell $width={75}>1 / 1 페이지</StatusCell>
    <StatusCell $grow={735} />
    <StatusCell $grow={587}>기본값</StatusCell>
    <StatusCell $open $grow={365}>
      <Svg width="16" height="14" viewBox="0 0 16 14">
        <rect x="4.500" y="4.500" width="10" height="7" rx="1" fill="#fff" stroke={DARK} />
        <path d="M1 4.500h6M3.500 2v6" stroke="#e95420" />
      </Svg>
      32.14 / 0.11
    </StatusCell>
    <StatusCell $grow={376}>
      <Svg width="18" height="14" viewBox="0 0 18 14">
        <rect x="4.500" y="4.500" width="11" height="8" rx="1" fill="#fff" stroke={DARK} />
        <path d="M4 1.500h12M4.500 0v3M15.500 0v3M1.500 4v9M0 4.500h3M0 12.500h3" stroke="#e95420" />
      </Svg>
      0.00 x 0.00
    </StatusCell>
    <StatusCell $width={30}>1:1</StatusCell>
    <IconCell $width={22}>
      <Svg width="12" height="14" viewBox="0 0 12 14">
        <path d="M4.500 1.500h3v5h2.500L6 11 2 6.500h2.500z" fill="#a2d43c" stroke={DARK} />
        <path d="M1 12.500h10" stroke={DARK} strokeWidth="1.500" />
      </Svg>
    </IconCell>
    <IconCell $width={29} />
    <IconCell $width={22}>
      <Svg width="15" height="15" viewBox="0 0 15 15">
        <path d="M7.500 2v11M2 7.500h11" stroke="#e95420" strokeWidth="1.200" />
        <path d="M7.500 0L10 3.500H5zM7.500 15L10 11.500H5zM0 7.500L3.500 5v5zM15 7.500L11.500 5v5z" fill="#e95420" />
      </Svg>
    </IconCell>
    <ZoomCell>
      <PlainButton aria-label="축소">
        <Svg width="10" height="10" viewBox="0 0 10 10">
          <path d="M1 5h8" stroke="#666" strokeWidth="2" />
        </Svg>
      </PlainButton>
      <ZoomSlider type="range" min="0" max="100" defaultValue="49" aria-label="확대/축소" />
      <PlainButton aria-label="확대">
        <Svg width="10" height="10" viewBox="0 0 10 10">
          <path d="M1 5h8M5 1v8" stroke="#666" strokeWidth="2" />
        </Svg>
      </PlainButton>
    </ZoomCell>
    <StatusCell $open $width={49}>105%</StatusCell>
  </StatusBar>
);

const App = () => (
  <Window>
    <GlobalStyle />
    <TitleBar>
      <Title>제목 없음 1 — LibreOffice Draw</Title>
      <WindowButtons>
        <RoundButton aria-label="최소화">
          <Svg width="9" height="9" viewBox="0 0 9 9">
            <path d="M.5 7.500h8" stroke="#3d3d3d" />
          </Svg>
        </RoundButton>
        <RoundButton aria-label="이전 크기로">
          <Svg width="9" height="9" viewBox="0 0 9 9" fill="none">
            <path d="M3 .5h5.500V6" stroke="#8a8a8a" />
            <rect x="1" y="3" width="5" height="5" stroke="#3d3d3d" strokeWidth="1.300" />
          </Svg>
        </RoundButton>
        <RoundButton aria-label="닫기"><Cross size={10} /></RoundButton>
      </WindowButtons>
    </TitleBar>
    <MenuBar>
      {menus.map((menu) => <MenuItem key={menu}>{menu}</MenuItem>)}
    </MenuBar>
    <CloseDocument aria-label="문서 닫기"><Cross /></CloseDocument>
    <Toolbar>
      {toolGroups.map((group, i) => (
        <Fragment key={group[0].icon}>
          {i > 0 && <ToolSeparator />}
          {group.map((tool) => <Tool key={tool.icon} {...tool} />)}
        </Fragment>
      ))}
    </Toolbar>
    <Workspace>
      <DrawBar>
        {drawGroups.map((group, i) => (
          <Fragment key={group[0].icon}>
            {i > 0 && <DrawSeparator />}
            {group.map((tool) => <DrawTool key={tool.icon} {...tool} />)}
          </Fragment>
        ))}
      </DrawBar>
      <PagePanel>
        <PanelTitle>
          <Heading>페이지</Heading>
          <PlainButton aria-label="패널 닫기">
            <Svg width="12" height="12" viewBox="0 0 12 12">
              <circle cx="6" cy="6" r="5.500" fill="#444" />
              <path d="M4 4l4 4M8 4L4 8" stroke="#fff" strokeWidth="1.400" />
            </Svg>
          </PlainButton>
        </PanelTitle>
        <PageList>
          <PageThumb aria-label="페이지 1">
            <ThumbNumber>1</ThumbNumber>
            <ThumbPage />
          </PageThumb>
        </PageList>
      </PagePanel>
      <Splitter $width={7}>
        <SplitterHandle aria-label="페이지 창 숨기기">
          <Svg width="5" height="8" viewBox="0 0 5 8"><path d="M5 0v8L0 4z" fill="#fff" /></Svg>
        </SplitterHandle>
      </Splitter>
      <DocumentArea>
        <Svg width="23" height="24" viewBox="0 0 23 24">
          <path d="M7 9.500h12M10.500 6v12" stroke="#3d3d3d" />
        </Svg>
        <HorizontalRuler />
        <span />
        <VerticalRuler />
        <Canvas>
          <Sheet><SheetMargins /></Sheet>
        </Canvas>
        <VerticalTrack><VerticalThumb /></VerticalTrack>
        <HorizontalTrack><HorizontalThumb /></HorizontalTrack>
        <LayerTabs />
      </DocumentArea>
      <Splitter $width={1}>
        <SplitterHandle aria-label="사이드바 숨기기">
          <Svg width="5" height="8" viewBox="0 0 5 8"><path d="M0 0v8l5-4z" fill="#fff" /></Svg>
        </SplitterHandle>
      </Splitter>
      <PropertiesSidebar />
    </Workspace>
    <Status />
  </Window>
);

export default App;
